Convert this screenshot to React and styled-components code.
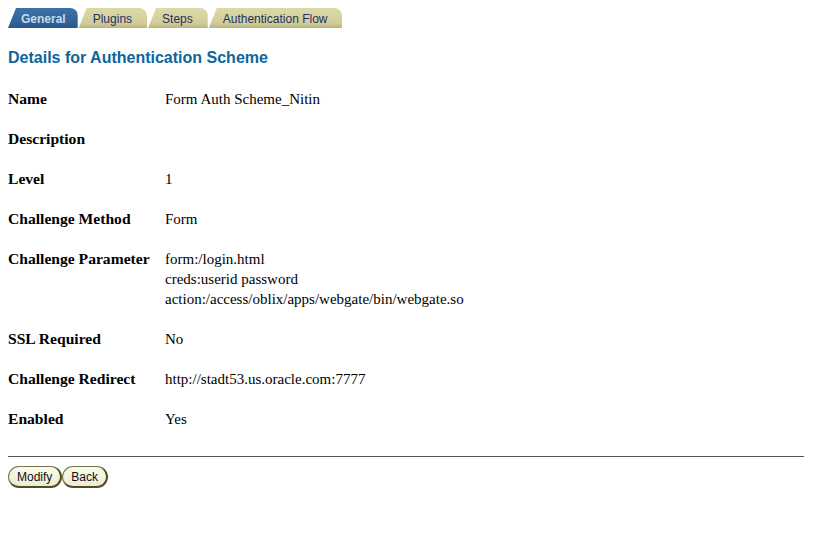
import React from 'react';
import styled, { createGlobalStyle } from 'styled-components';

const GlobalStyle = createGlobalStyle`
    body {
        margin: 8px;
        background: #ffffff;
        font-family: "Liberation Serif", "Times New Roman", serif;
        font-size: 15px;
        color: #000000;
    }
`

const TabBar = styled.div`
    display: flex;
    gap: 1px;
    height: 20px;
`

const Tab = styled.div`
    display: flex;
    align-items: center;
    height: 20px;
    padding: ${(p) => (p.active ? '1px 12px 0 13px' : '1px 15px 0 14px')};
    font-family: "Liberation Sans", Arial, sans-serif;
    font-size: 12px;
    font-weight: ${(p) => (p.active ? 'bold' : 'normal')};
    color: ${(p) => (p.active ? '#c9d9ec' : '#1f2f66')};
    background: ${(p) =>
        p.active
            ? 'linear-gradient(#3b72a8, #2f6399 70%, #28578a)'
            : 'linear-gradient(#ddd9a8, #d2cd98 75%, #b8b47c)'};
    border-top-right-radius: 8px;
    clip-path: polygon(0 100%, 8px 0, 100% 0, 100% 100%);
    box-sizing: border-box;
`

const Heading = styled.h1`
    margin: 20px 0 11px;
    font-family: "Liberation Sans", Arial, sans-serif;
    font-size: 16px;
    line-height: 20px;
    font-weight: bold;
    color: #0d6599;
`

const Details = styled.div`
    display: grid;
    grid-template-columns: 157px 1fr;
`

const Label = styled.div`
    padding: 10px 0;
    line-height: 20px;
    font-size: 15.6px;
    font-weight: bold;
`

const Value = styled.div`
    padding: 10px 0;
    line-height: 20px;
`

const Rule = styled.hr`
    margin: 17px 1px 0 0;
    border: none;
    border-top: 1px solid #555555;
    height: 0;
`

const ButtonRow = styled.div`
    display: flex;
    margin-top: 9px;
`

const Button = styled.button`
    height: 22px;
    padding: 0 8px;
    font-family: "Liberation Sans", Arial, sans-serif;
    font-size: 12px;
    color: #111111;
    background: linear-gradient(#fbfbef, #ecebd2);
    border: 1px solid #77774a;
    border-right: 2px solid #4e4e22;
    border-bottom: 2px solid #4e4e22;
    border-radius: 11px;
    box-sizing: border-box;
`

const tabs = ['General', 'Plugins', 'Steps', 'Authentication Flow']

const details = [
    { label: 'Name', value: ['Form Auth Scheme_Nitin'] },
    { label: 'Description', value: [] },
    { label: 'Level', value: ['1'] },
    { label: 'Challenge Method', value: ['Form'] },
    {
        label: 'Challenge Parameter',
        value: ['form:/login.html', 'creds:userid password', 'action:/access/oblix/apps/webgate/bin/webgate.so'],
    },
    { label: 'SSL Required', value: ['No'] },
    { label: 'Challenge Redirect', value: ['http://stadt53.us.oracle.com:7777'] },
    { label: 'Enabled', value: ['Yes'] },
]

const App = () => {
    return (<>
        <GlobalStyle />
        <TabBar>
            {tabs.map((t, i) => <Tab key={t} active={i === 0}>{t}</Tab>)}
        </TabBar>

        <Heading>Details for Authentication Scheme</Heading>

        <Details>
            {details.map((d) => (
                <React.Fragment key={d.label}>
                    <Label>{d.label}</Label>
                    <Value>
                        {d.value.length ? d.value.map((line) => <div key={line}>{line}</div>) : <div>&nbsp;</div>}
                    </Value>
                </React.Fragment>
            ))}
        </Details>

        <Rule />
        <ButtonRow>
            <Button>Modify</Button>
            <Button>Back</Button>
        </ButtonRow>
    </>);
}

export default App;
